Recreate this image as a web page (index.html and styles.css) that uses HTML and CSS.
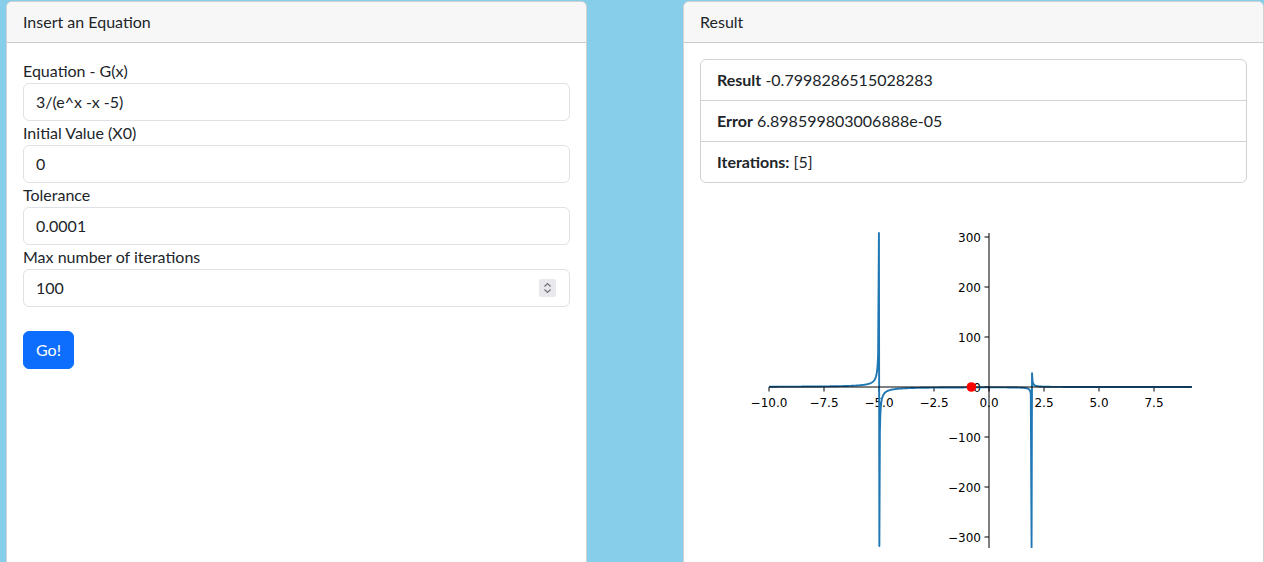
FILE: index.html
```html
<!DOCTYPE html>
<html lang="en">
<head>
<meta charset="utf-8">
<title>Fixed Point</title>
<link rel="stylesheet" href="styles.css">
</head>
<body>
<div class="page">
  <section class="card">
    <div class="card-header">Insert an Equation</div>
    <form class="card-body">
      <label class="form-label">Equation - G(x)</label>
      <input class="form-control" type="text" value="3/(e^x -x -5)">
      <label class="form-label">Initial Value (X0)</label>
      <input class="form-control" type="text" value="0">
      <label class="form-label">Tolerance</label>
      <input class="form-control" type="text" value="0.0001">
      <label class="form-label">Max number of iterations</label>
      <div class="num-wrap">
        <input class="form-control" type="text" value="100">
        <span class="spin">
          <svg width="17" height="18" viewBox="0 0 17 18">
            <path d="M5.5 7.5 L8.5 4.5 L11.5 7.5" fill="none" stroke="#6f6f78" stroke-width="1.2"/>
            <path d="M5.5 10.5 L8.5 13.5 L11.5 10.5" fill="none" stroke="#6f6f78" stroke-width="1.2"/>
          </svg>
        </span>
      </div>
      <button class="btn" type="button">Go!</button>
    </form>
  </section>
  <section class="card">
    <div class="card-header">Result</div>
    <div class="card-body">
      <ul class="list-group">
        <li class="list-item"><b>Result</b> -0.7998286515028283</li>
        <li class="list-item"><b>Error</b> 6.898599803006888e-05</li>
        <li class="list-item"><b>Iterations:</b> [5]</li>
      </ul>
      <svg class="plot" width="547" height="370" viewBox="0 0 547 370">
        <g class="ticks" stroke="#000" stroke-width="1">
          <line x1="69" y1="188" x2="69" y2="192.5"/>
          <line x1="124" y1="188" x2="124" y2="192.5"/>
          <line x1="179" y1="188" x2="179" y2="192.5"/>
          <line x1="234" y1="188" x2="234" y2="192.5"/>
          <line x1="289" y1="188" x2="289" y2="192.5"/>
          <line x1="344" y1="188" x2="344" y2="192.5"/>
          <line x1="399" y1="188" x2="399" y2="192.5"/>
          <line x1="454" y1="188" x2="454" y2="192.5"/>
          <line x1="284.5" y1="38" x2="289" y2="38"/>
          <line x1="284.5" y1="88" x2="289" y2="88"/>
          <line x1="284.5" y1="138" x2="289" y2="138"/>
          <line x1="284.5" y1="188" x2="289" y2="188"/>
          <line x1="284.5" y1="238" x2="289" y2="238"/>
          <line x1="284.5" y1="288" x2="289" y2="288"/>
          <line x1="284.5" y1="338" x2="289" y2="338"/>
        </g>
        <g class="tick-labels xl">
          <text x="69" y="208">−10.0</text>
          <text x="124" y="208">−7.5</text>
          <text x="179" y="208">−5.0</text>
          <text x="234" y="208">−2.5</text>
          <text x="289" y="208">0.0</text>
          <text x="344" y="208">2.5</text>
          <text x="399" y="208">5.0</text>
          <text x="454" y="208">7.5</text>
        </g>
        <g class="tick-labels yl">
          <text x="281" y="43">300</text>
          <text x="281" y="93">200</text>
          <text x="281" y="143">100</text>
          <text x="281" y="193">0</text>
          <text x="281" y="243">−100</text>
          <text x="281" y="293">−200</text>
          <text x="281" y="343">−300</text>
        </g>
        <path id="curve" d="" fill="none" stroke="#1f77b4" stroke-width="1.9" stroke-linejoin="round"/>
        <line x1="69" y1="188" x2="492" y2="188" stroke="#000" stroke-width="1"/>
        <line x1="289" y1="34" x2="289" y2="349" stroke="#000" stroke-width="1"/>
        <circle cx="271.4" cy="188" r="4.8" fill="#ff0000"/>
      </svg>
    </div>
  </section>
</div>
<script src="script.js"></script>
</body>
</html>
```

FILE: styles.css
```css
* { box-sizing: border-box; }

html, body { margin: 0; padding: 0; }

body {
  background: #87ceeb;
  font-family: Lato, "Noto Sans", sans-serif;
  font-size: 16px;
  line-height: 1.5;
  color: #212529;
}

.page {
  display: flex;
  gap: 96px;
  padding: 1px 0 0 6px;
  height: 100vh;
  overflow: hidden;
}

.card {
  flex: none;
  width: 581px;
  height: 640px;
  background: #fff;
  border: 1px solid rgba(0, 0, 0, 0.175);
  border-radius: 6px;
}

.card-header {
  padding: 8px 16px;
  background: #f7f7f7;
  border-bottom: 1px solid rgba(0, 0, 0, 0.175);
  border-radius: 5px 5px 0 0;
}

.card-body {
  padding: 16px;
  margin: 0;
}

.form-label {
  display: block;
}

.form-control {
  display: block;
  width: 100%;
  margin: 0;
  padding: 6px 12px;
  font: inherit;
  line-height: 1.5;
  color: #212529;
  background: #fff;
  border: 1px solid #dee2e6;
  border-radius: 6px;
  outline: none;
}

.num-wrap {
  position: relative;
}

.spin {
  position: absolute;
  top: 10px;
  right: 14px;
  width: 17px;
  height: 18px;
  background: #e9e9ed;
  border-radius: 2px;
  display: flex;
}

.btn {
  display: block;
  margin-top: 24px;
  padding: 6px 12px;
  font: inherit;
  line-height: 1.5;
  color: #fff;
  background: #0d6efd;
  border: 1px solid #0d6efd;
  border-radius: 6px;
}

.list-group {
  list-style: none;
  margin: 0;
  padding: 0;
  border: 1px solid rgba(0, 0, 0, 0.175);
  border-radius: 6px;
}

.list-item {
  padding: 8px 16px;
}

.list-item + .list-item {
  border-top: 1px solid rgba(0, 0, 0, 0.175);
}

.list-item b {
  font-weight: 700;
}

.plot {
  display: block;
  margin-top: 16px;
}

.tick-labels {
  font-family: "DejaVu Sans", sans-serif;
  font-size: 12px;
  fill: #000;
}

.xl { text-anchor: middle; }
.yl { text-anchor: end; }
```

FILE: script.js
```js
(function () {
  var X = function (x) { return 289 + 22 * x; };
  var Y = function (y) { return 188 - 0.5 * y; };
  var f = function (x) { return 3 / (Math.exp(x) - x - 5); };
  function root(x) {
    for (var i = 0; i < 60; i++) {
      var g = Math.exp(x) - x - 5, d = Math.exp(x) - 1;
      x -= g / d;
    }
    return x;
  }
  var r1 = root(-5), r2 = root(2);
  var d1 = Math.exp(r1) - 1, d2 = Math.exp(r2) - 1;
  var xs = [];
  for (var x = -10; x <= 9.23 + 1e-9; x += 0.02) {
    if (Math.abs(x - r1) < 0.03 || Math.abs(x - r2) < 0.03) continue;
    xs.push(x);
  }
  xs.push(r1 + 3 / (308 * d1));
  xs.push(r1 + 3 / (-318 * d1));
  xs.push(r2 + 3 / (-320 * d2));
  xs.push(r2 + 3 / (28 * d2));
  xs.sort(function (a, b) { return a - b; });
  var d = xs.map(function (x, i) {
    return (i ? "L" : "M") + X(x).toFixed(2) + " " + Y(f(x)).toFixed(2);
  }).join("");
  document.getElementById("curve").setAttribute("d", d);
})();
```
